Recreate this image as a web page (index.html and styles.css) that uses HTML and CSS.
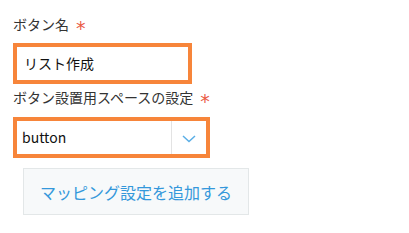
FILE: index.html
```html
<!DOCTYPE html>
<html lang="ja">
<head>
  <meta charset="UTF-8" />
  <title>ボタン設定</title>
  <link rel="stylesheet" href="styles.css">
</head>
<body>

<div class="field">
  <div class="field-label">ボタン名<span class="required">*</span></div>
  <div class="text-input error">リスト作成</div>
</div>

<div class="field">
  <div class="field-label">ボタン設置用スペースの設定<span class="required">*</span></div>
  <div class="select-input error">
    <span class="select-value">button</span>
    <span class="select-arrow">
      <svg width="14" height="8" viewBox="0 0 14 8">
        <polyline points="1,1 7,6.5 13,1" fill="none" stroke="#5aaee6" stroke-width="1.5" />
      </svg>
    </span>
  </div>
</div>

<button class="add-button">マッピング設定を追加する</button>

</body>
</html>
```

FILE: styles.css
```css
* {
  box-sizing: border-box;
}

body {
  margin: 0;
  padding: 14px 0 0 13px;
  font-family: "Noto Sans CJK JP", "Noto Sans", sans-serif;
  color: #333;
  background: #fff;
}

.field-label {
  font-size: 14px;
  line-height: 20px;
  height: 20px;
}

.required {
  display: inline-block;
  color: #ea5a44;
  font-family: "DejaVu Sans", sans-serif;
  font-size: 19px;
  line-height: 1;
  margin-left: 7px;
  vertical-align: -5px;
}

.text-input {
  width: 179px;
  height: 41px;
  margin-top: 9px;
  padding-left: 7px;
  font-size: 14px;
  line-height: 33px;
  color: #111;
  background: #fff;
}

.error {
  border: 4px solid #f7853a;
}

.field + .field {
  margin-top: 3px;
}

.select-input {
  display: flex;
  width: 197px;
  height: 41px;
  margin-top: 10px;
  background: #fff;
}

.select-value {
  flex: 1;
  padding-left: 5px;
  font-size: 14px;
  line-height: 33px;
  color: #111;
}

.select-arrow {
  width: 35px;
  display: flex;
  align-items: center;
  justify-content: center;
  border-left: 1px solid #e3e3e3;
  padding-top: 2px;
}

.add-button {
  display: block;
  margin: 10px 0 0 10px;
  width: 226px;
  height: 47px;
  padding: 0;
  font-family: inherit;
  font-size: 16px;
  color: #3498db;
  background: #f7f9fa;
  border: 1px solid #e3e7e8;
}
```
